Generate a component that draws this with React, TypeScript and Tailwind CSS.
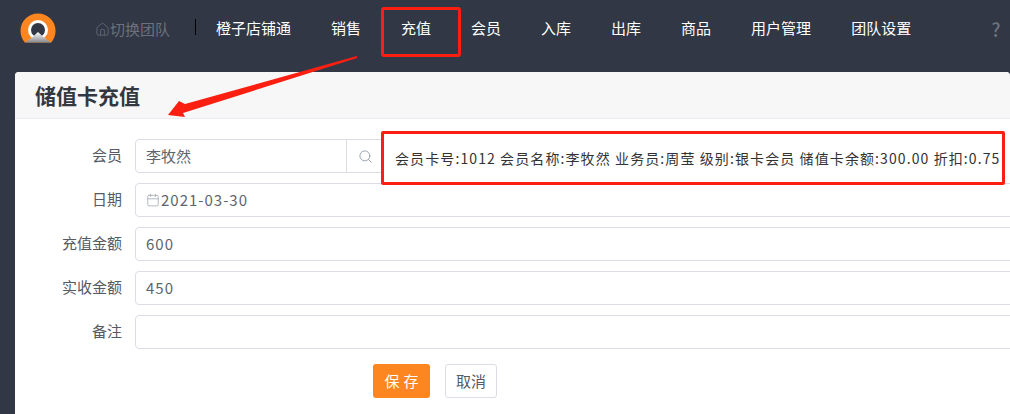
import { Calendar, House, Search } from "lucide-react";

const fontStack = "font-['Microsoft_YaHei','Noto_Sans_CJK_SC',sans-serif]";

const navItems = ["销售", "充值", "会员", "入库", "出库", "商品", "用户管理", "团队设置"];

function Logo() {
  return (
    <svg width="36" height="30" viewBox="0 0 36 30" className="shrink-0">
      <defs>
        <linearGradient id="peak" x1="0" y1="0" x2="0" y2="1">
          <stop offset="0" stopColor="#ffffff" />
          <stop offset="1" stopColor="#85878e" />
        </linearGradient>
      </defs>
      <path d="M4.8 29.5 A17.5 17.5 0 1 1 31.2 29.5 Z" fill="#fe8620" />
      <circle cx="18" cy="17" r="8.5" fill="#313745" stroke="#fff" strokeWidth="3" />
      <path d="M5 29.5 L12 24.5 L18 19 L24 24.5 L31 29.5 Z" fill="url(#peak)" />
    </svg>
  );
}

function Row({ label, children }: { label: string; children: React.ReactNode }) {
  return (
    <div className="flex h-[34px] items-center">
      <label className="mt-[-2px] w-[107px] shrink-0 text-right text-[15px] text-[#555a64]">{label}</label>
      <div className="ml-[13px] h-full">{children}</div>
    </div>
  );
}

function Field({ value, icon }: { value?: string; icon?: React.ReactNode }) {
  return (
    <div className="flex h-full w-[900px] items-center rounded-[4px] border border-[#dcdde4] bg-white pl-[10px] text-[15px] tracking-[1px] text-[#5e6470]">
      {icon}
      {value}
    </div>
  );
}

export default function App() {
  return (
    <div className={`relative flex h-[414px] w-[1010px] flex-col overflow-hidden bg-[#313745] ${fontStack}`}>
      <nav className="flex h-[72px] shrink-0 items-start pl-[20px] pt-[13px]">
        <Logo />
        <div className="ml-[39px] mt-[6px] flex h-[20px] w-[100px] shrink-0 items-center text-[15px] text-[#6c717c]">
          <House size={15} strokeWidth={1.2} />
          切换团队
        </div>
        <div className="mt-[6px] h-[16px] w-px shrink-0 bg-black" />
        <div className="ml-[20px] mt-[5px] flex h-[20px] items-center gap-[40px] whitespace-nowrap text-[15px] text-white">
          <span>橙子店铺通</span>
          {navItems.map((item) => (
            <span key={item}>{item}</span>
          ))}
        </div>
        <span className="ml-[80px] mt-[5px] text-[19px] font-medium leading-[22px] text-[#6c717c]">?</span>
      </nav>

      <main className="ml-[15px] flex-1 overflow-hidden rounded-t-[4px] bg-white">
        <div className="flex h-[47px] items-center border-b border-[#ebebf2] bg-[#f7f7f7] pl-[20px] pt-[2px] text-[21px] font-bold text-[#333840]">
          储值卡充值
        </div>
        <form className="flex flex-col gap-[10px] pt-[20px]">
          <Row label="会员">
            <div className="flex h-full w-[249px] items-center rounded-[4px] border border-[#dcdde4] bg-white text-[15px] text-[#5e6470]">
              <span className="flex-1 pl-[10px]">李牧然</span>
              <span className="flex h-full w-[37px] items-center border-l border-[#dcdde4] pl-[11px]">
                <Search size={15} strokeWidth={1.2} className="text-[#7f8b99]" />
              </span>
            </div>
          </Row>
          <Row label="日期">
            <Field
              value="2021-03-30"
              icon={<Calendar size={14} strokeWidth={1.4} className="mr-px text-[#a6aab6]" />}
            />
          </Row>
          <Row label="充值金额">
            <Field value="600" />
          </Row>
          <Row label="实收金额">
            <Field value="450" />
          </Row>
          <Row label="备注">
            <Field />
          </Row>
          <div className="ml-[358px] mt-[5px] flex gap-[15px]">
            <button type="button" className="h-[34px] w-[57px] rounded-[3px] bg-[#fe8620] pl-[4px] text-[15px] tracking-[4px] text-white">
              保存
            </button>
            <button type="button" className="h-[34px] w-[52px] rounded-[3px] border border-[#dcdde4] bg-white text-[15px] text-[#555a64]">
              取消
            </button>
          </div>
        </form>
      </main>

      {/* red annotations drawn over the screenshot */}
      <div className="absolute left-[381px] top-[7px] h-[50px] w-[80px] rounded-[3px] border-[3px] border-[#fb1f12]" />
      <div className="absolute left-[381px] top-[131px] flex h-[54px] w-[624px] items-center rounded-[2px] border-[3px] border-[#fb1f12] bg-white pl-[11px] text-[14px] tracking-[1.1px] whitespace-nowrap text-[#333333]">
        会员卡号:1012 会员名称:李牧然 业务员:周莹 级别:银卡会员 储值卡余额:300.00 折扣:0.75
      </div>
      <svg className="absolute left-[160px] top-[50px]" width="200" height="72" viewBox="0 0 200 72">
        <path d="M197 6 L25 54 L19 51 L8 65 L25 67 L23 63 L197 8 Z" fill="#fb1f12" />
      </svg>
    </div>
  );
}
